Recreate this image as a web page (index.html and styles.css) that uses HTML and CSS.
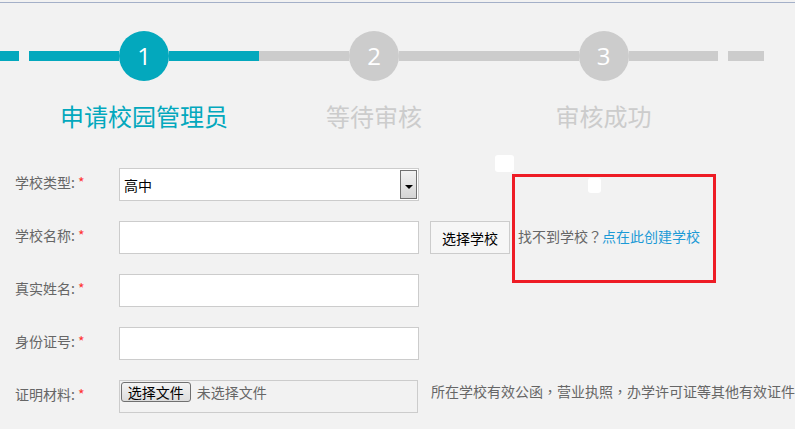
FILE: index.html
```html
<!DOCTYPE html>
<html lang="zh-CN">
<head>
    <meta charset="UTF-8">
    <title>申请校园管理员</title>
    <link rel="stylesheet" href="styles.css">
</head>
<body>
    <div class="topline"></div>

    <!-- steps -->
    <div class="steps">
        <span class="dash done"></span>
        <div class="step done">
            <div class="track"><span class="line"></span><span class="num">1</span><span class="line"></span></div>
            <div class="title">申请校园管理员</div>
        </div>
        <div class="step">
            <div class="track"><span class="line"></span><span class="num">2</span><span class="line"></span></div>
            <div class="title">等待审核</div>
        </div>
        <div class="step">
            <div class="track"><span class="line"></span><span class="num">3</span><span class="line"></span></div>
            <div class="title">审核成功</div>
        </div>
        <span class="dash"></span>
    </div>

    <!-- form -->
    <form class="form">
        <div class="row">
            <label class="lbl">学校类型: <em>*</em></label>
            <div class="select-box">
                <select><option>高中</option><option>初中</option><option>小学</option></select>
                <span class="arrow"></span>
            </div>
        </div>
        <div class="row">
            <label class="lbl">学校名称: <em>*</em></label>
            <input class="field" type="text">
            <button type="button" class="pick">选择学校</button>
            <span class="notfound">找不到学校<span class="p" lang="zh-TW">？</span><a href="#">点在此创建学校</a></span>
        </div>
        <div class="row">
            <label class="lbl">真实姓名: <em>*</em></label>
            <input class="field" type="text">
        </div>
        <div class="row">
            <label class="lbl">身份证号: <em>*</em></label>
            <input class="field" type="text">
        </div>
        <div class="row">
            <label class="lbl">证明材料: <em>*</em></label>
            <div class="file-box">
                <span class="file-btn">选择文件</span>
                <span class="file-name">未选择文件</span>
            </div>
            <span class="hint">所在学校有效公函<span class="p" lang="zh-TW">，</span>营业执照<span class="p" lang="zh-TW">，</span>办学许可证等其他有效证件</span>
        </div>
    </form>

    <!-- annotation overlay -->
    <div class="mark"></div>
    <span class="blob blob-a"></span>
    <span class="blob blob-b"></span>
</body>
</html>
```

FILE: styles.css
```css
html, body {
    margin: 0;
    padding: 0;
}

body {
    background: #f2f2f2;
    font-family: "Noto Sans CJK SC", "Noto Sans", sans-serif;
    font-size: 14px;
    color: #666;
    width: 795px;
    height: 429px;
    overflow: hidden;
    position: relative;
}

.topline {
    margin-top: 2px;
    height: 1px;
    background: #a4b0c8;
}

/* steps */
.steps {
    display: flex;
    align-items: flex-start;
    margin-top: 28px;
}

.dash {
    width: 19px;
    height: 10px;
    margin-top: 20px;
    margin-right: 10px;
    background: #ccc;
}

.dash.done {
    background: #03a8bd;
}

.steps .dash:last-child {
    width: 36px;
    margin-right: 0;
    margin-left: 10px;
}

.step {
    width: 230px;
    display: flex;
    flex-direction: column;
    align-items: center;
}

.step:nth-of-type(3) {
    width: 229px;
}

.track {
    width: 100%;
    height: 50px;
    display: flex;
    align-items: center;
}

.track .line {
    flex: 1;
    height: 10px;
    background: #ccc;
}

.track .num {
    width: 50px;
    height: 50px;
    border-radius: 50%;
    background: #ccc;
    color: #fff;
    font-family: "Open Sans", "Noto Sans", sans-serif;
    font-size: 24px;
    line-height: 50px;
    text-align: center;
}

.title {
    margin-top: 20px;
    font-size: 24px;
    line-height: 30px;
    color: #ccc;
    white-space: nowrap;
}

.step.done .line,
.step.done .num {
    background: #03a8bd;
}

.step.done .title {
    color: #03a8bd;
}

/* form */
.form {
    margin: 37px 0 0 15px;
}

.row {
    display: flex;
    align-items: center;
    height: 33px;
    margin-bottom: 20px;
}

.lbl {
    width: 104px;
    margin-top: -6px;
    white-space: nowrap;
}

.lbl em {
    font-style: normal;
    color: #f33;
}

.field {
    box-sizing: border-box;
    width: 300px;
    height: 33px;
    margin: 0;
    border: 1px solid #ccc;
    background: #fff;
    padding: 0 5px;
}

.select-box {
    box-sizing: border-box;
    width: 300px;
    height: 33px;
    border: 1px solid #ccc;
    background: #fff;
    display: flex;
    align-items: stretch;
}

.select-box select {
    flex: 1;
    appearance: none;
    -webkit-appearance: none;
    border: none;
    background: transparent;
    padding: 0 4px;
    font-family: "Noto Sans CJK SC", sans-serif;
    font-size: 14px;
    color: #000;
    outline: none;
}

.arrow {
    width: 15px;
    margin: 1px 1px 1px 0;
    border: 1px solid #707070;
    background: linear-gradient(#f2f2f2, #d4d4d4);
    position: relative;
}

.arrow::after {
    content: "";
    position: absolute;
    left: 4px;
    top: 14px;
    border-left: 4px solid transparent;
    border-right: 4px solid transparent;
    border-top: 4px solid #000;
}

.pick {
    box-sizing: border-box;
    width: 80px;
    height: 33px;
    margin-left: 11px;
    border: 1px solid #ccc;
    background: #f6f6f6;
    color: #000;
    font-family: "Noto Sans CJK SC", sans-serif;
    font-size: 14px;
    padding: 0;
}

.notfound {
    margin-left: 8px;
    margin-top: -4px;
    white-space: nowrap;
}

/* full-width punctuation, centred in its cell */
.p {
    font-family: "Noto Sans CJK TC", sans-serif;
}

.notfound a {
    color: #1c9ad6;
    text-decoration: none;
}

.file-box {
    box-sizing: border-box;
    width: 300px;
    height: 33px;
    border: 1px solid #ccc;
    display: flex;
    align-items: flex-start;
    padding: 1px 0 0 1px;
}

.file-btn {
    box-sizing: border-box;
    width: 70px;
    height: 20px;
    border: 1px solid #707070;
    border-radius: 3px;
    background: linear-gradient(#f4f4f4, #dcdcdc);
    color: #000;
    font-size: 14px;
    line-height: 18px;
    text-align: center;
}

.file-name {
    margin-left: 6px;
    line-height: 20px;
}

.hint {
    margin-left: 13px;
    margin-top: -12px;
    white-space: nowrap;
}

/* annotation */
.mark {
    position: absolute;
    left: 512px;
    top: 174px;
    width: 204px;
    height: 109px;
    box-sizing: border-box;
    border: 3px solid #ee1c25;
}

.blob {
    position: absolute;
    background: #fff;
    border-radius: 3px;
}

.blob-a {
    left: 495px;
    top: 155px;
    width: 19px;
    height: 17px;
}

.blob-b {
    left: 588px;
    top: 178px;
    width: 13px;
    height: 15px;
}
```
